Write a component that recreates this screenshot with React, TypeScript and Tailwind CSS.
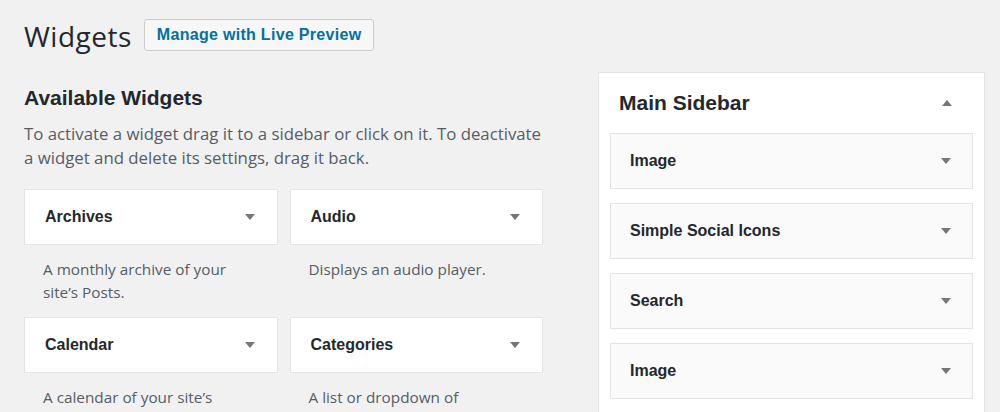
import React from "react";

const availableWidgets = [
  { title: "Archives", desc: "A monthly archive of your site’s Posts." },
  { title: "Audio", desc: "Displays an audio player." },
  { title: "Calendar", desc: "A calendar of your site’s Posts." },
  { title: "Categories", desc: "A list or dropdown of categories." },
];

const sidebarWidgets = ["Image", "Simple Social Icons", "Search", "Image", "Text"];

const bodyFont = { fontFamily: '"Open Sans", "Liberation Sans", sans-serif' };

function Arrow({ up = false }: { up?: boolean }) {
  return (
    <svg width="10" height="6" viewBox="0 0 10 6" className="shrink-0">
      {up ? <polygon points="0,6 10,6 5,0" fill="#72777c" /> : <polygon points="0,0 10,0 5,6" fill="#72777c" />}
    </svg>
  );
}

function WidgetCard({ title, desc }: { title: string; desc: string }) {
  return (
    <div>
      <div className="h-[56px] bg-white border border-[#e2e4e7] flex items-center justify-between pl-[20px] pr-[22px]">
        <span className="text-[16px] font-bold text-[#23282d]">{title}</span>
        <Arrow />
      </div>
      <p className="mt-[13px] pl-[19px] pr-[24px] text-[15.3px] leading-[23px] text-[#555d66]" style={bodyFont}>
        {desc}
      </p>
    </div>
  );
}

export default function App() {
  return (
    <div
      className="h-[412px] overflow-hidden bg-[#f1f1f1] pl-6 pt-[19px]"
      style={{ fontFamily: '"Liberation Sans", Arial, sans-serif' }}
    >
      {/* Page header */}
      <div className="flex items-center gap-3">
        <h1 className="text-[28px] leading-[32px] tracking-[0.5px] text-[#23282d] translate-y-[1px]" style={bodyFont}>
          Widgets
        </h1>
        <button className="h-[32px] px-[12px] rounded-[3px] border border-[#cccccc] bg-[#f7f7f7] text-[16px] font-bold tracking-[0.3px] text-[#0071a1]">
          Manage with Live Preview
        </button>
      </div>

      <div className="flex items-start mt-[21px]">
        {/* Available widgets */}
        <div className="w-[519px] shrink-0 pt-[12px]">
          <h2 className="text-[21px] leading-[28px] font-bold text-[#23282d]">Available Widgets</h2>
          <p className="mt-[10px] text-[16.8px] leading-[24px] text-[#555d66]" style={bodyFont}>
            To activate a widget drag it to a sidebar or click on it. To deactivate a widget and delete its settings, drag it back.
          </p>
          <div className="grid grid-cols-2 gap-x-3 gap-y-[13px] mt-[19px]">
            {availableWidgets.map((w) => (
              <WidgetCard key={w.title} title={w.title} desc={w.desc} />
            ))}
          </div>
        </div>

        {/* Main sidebar */}
        <div className="ml-[55px] w-[387px] shrink-0 bg-white border border-[#e2e4e7] px-[11px] pb-4">
          <div className="flex items-center justify-between pt-[16px] pb-[16px] pl-[9px] pr-[21px]">
            <h2 className="text-[21px] leading-[28px] font-bold text-[#23282d]">Main Sidebar</h2>
            <Arrow up />
          </div>
          <div className="flex flex-col gap-[14px]">
            {sidebarWidgets.map((name, i) => (
              <div
                key={i}
                className="h-[56px] bg-[#fafafa] border border-[#e2e4e7] flex items-center justify-between pl-[19px] pr-[21px]"
              >
                <span className="text-[16px] font-bold text-[#23282d]">{name}</span>
                <Arrow />
              </div>
            ))}
          </div>
        </div>
      </div>
    </div>
  );
}
